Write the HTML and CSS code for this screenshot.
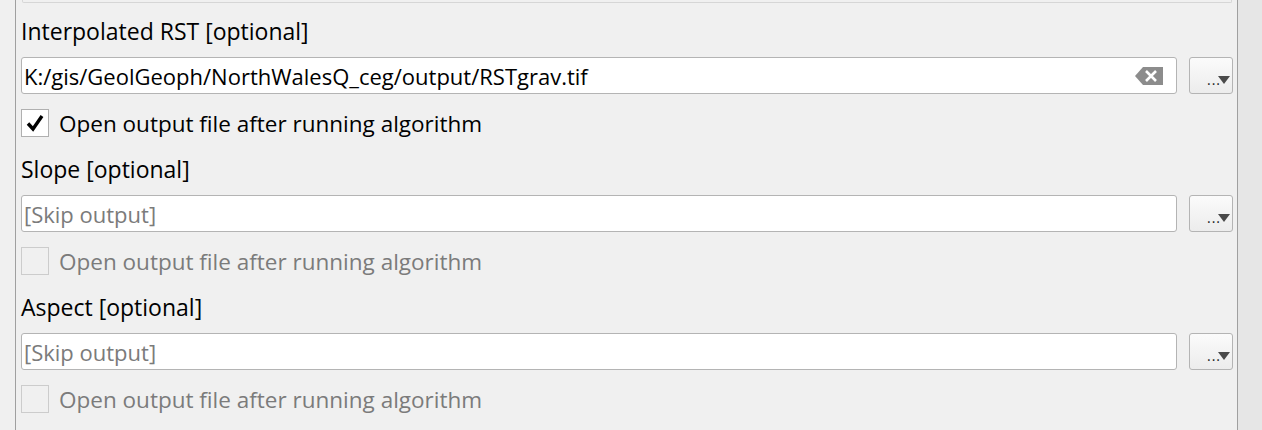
FILE: index.html
```html
<!DOCTYPE html>
<html>
<head>
<meta charset="utf-8">
<link rel="stylesheet" href="styles.css">
</head>
<body>
<div class="page">
  <div class="panel">
    <div class="prev-box"></div>

    <div class="param">
      <div class="label">Interpolated RST [optional]</div>
      <div class="file-row">
        <div class="input">
          <span class="value">K:/gis/GeolGeoph/NorthWalesQ_ceg/output/RSTgrav.tif</span>
          <svg class="clear" width="28" height="20" viewBox="0 0 28 20">
            <path d="M0 10 L8 1 H28 V19 H8 Z" fill="#8c8c8c"/>
            <path d="M11 5 L21 15 M21 5 L11 15" stroke="#ffffff" stroke-width="2.6"/>
          </svg>
        </div>
        <div class="browse"><span class="dots">...</span><span class="tri"></span></div>
      </div>
      <div class="check-row">
        <span class="box checked">
          <svg width="20" height="20" viewBox="0 0 20 20"><path d="M3 10.5 L8 16 L17 3" fill="none" stroke="#000" stroke-width="3.4"/></svg>
        </span>
        <span class="check-text">Open output file after running algorithm</span>
      </div>
    </div>

    <div class="param">
      <div class="label">Slope [optional]</div>
      <div class="file-row">
        <div class="input"><span class="placeholder">[Skip output]</span></div>
        <div class="browse"><span class="dots">...</span><span class="tri"></span></div>
      </div>
      <div class="check-row disabled">
        <span class="box"></span>
        <span class="check-text">Open output file after running algorithm</span>
      </div>
    </div>

    <div class="param">
      <div class="label">Aspect [optional]</div>
      <div class="file-row">
        <div class="input"><span class="placeholder">[Skip output]</span></div>
        <div class="browse"><span class="dots">...</span><span class="tri"></span></div>
      </div>
      <div class="check-row disabled">
        <span class="box"></span>
        <span class="check-text">Open output file after running algorithm</span>
      </div>
    </div>
  </div>
  <div class="side"></div>
</div>
</body>
</html>
```

FILE: styles.css
```css
html, body {
  margin: 0;
  padding: 0;
  background: #f0f0f0;
  font-family: "Open Sans", "Noto Sans", "Liberation Sans", sans-serif;
  font-size: 23px;
  color: #000;
}

.page {
  display: flex;
  height: 430px;
  overflow: hidden;
}

.panel {
  margin-left: 15px;
  width: 1212px;
  border-left: 1px solid #a0a0a0;
  border-right: 1px solid #a0a0a0;
  padding: 0 4px 0 5px;
  background: #f0f0f0;
}

.side {
  flex: 1;
  background: #e6e6e6;
}

.prev-box {
  height: 2px;
  border: 1px solid #d6d6d6;
  border-top: none;
  border-radius: 0 0 2px 2px;
  margin: 0 1px 15px 1px;
}

.param {
  display: flex;
  flex-direction: column;
  padding-bottom: 19px;
}

.label {
  height: 26px;
  line-height: 26px;
  white-space: nowrap;
}

.file-row {
  display: flex;
  gap: 12px;
  margin-top: 13px;
  height: 37px;
}

.input {
  flex: 1;
  display: flex;
  align-items: center;
  justify-content: space-between;
  background: #fff;
  border: 1px solid #b4b4b4;
  border-radius: 3px;
  padding: 0 13px 0 2px;
  font-size: 22px;
}

.value {
  white-space: nowrap;
}

.placeholder {
  color: #7b7b7b;
  white-space: nowrap;
}

.clear {
  display: block;
}

.browse {
  box-sizing: border-box;
  width: 44px;
  flex: none;
  border: 1px solid #b4b4b4;
  border-radius: 3px;
  background: linear-gradient(#fbfbfb, #ececec);
  display: flex;
  align-items: flex-end;
  justify-content: flex-end;
  padding: 0 2px 7px 0;
}

.dots {
  font-size: 14px;
  line-height: 10px;
  letter-spacing: 1px;
  color: #1a1a1a;
  margin-right: -3px;
  margin-bottom: 1px;
}

.tri {
  width: 0;
  height: 0;
  border-left: 6px solid transparent;
  border-right: 6px solid transparent;
  border-top: 8px solid #4a4a4a;
  margin-bottom: 2px;
}

.check-row {
  display: flex;
  align-items: center;
  gap: 10px;
  margin-top: 15px;
  height: 28px;
}

.box {
  width: 26px;
  height: 26px;
  border: 1px solid #b0b0b0;
  background: #fff;
  display: flex;
  align-items: center;
  justify-content: center;
}

.check-text {
  white-space: nowrap;
  font-size: 22.5px;
}

.disabled .box {
  background: #f0f0f0;
  border-color: #cccccc;
}

.disabled .check-text {
  color: #7b7b7b;
}
```
